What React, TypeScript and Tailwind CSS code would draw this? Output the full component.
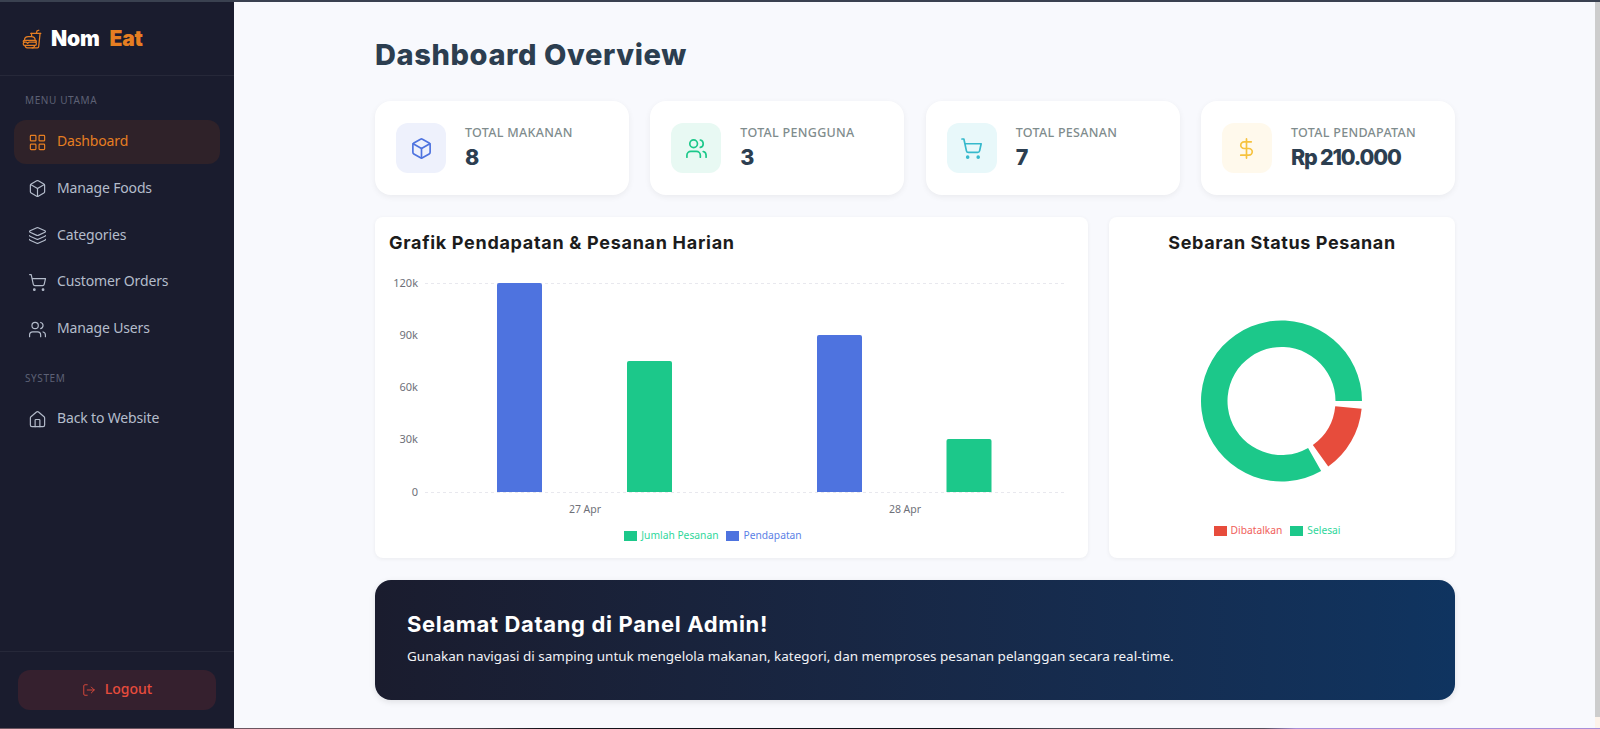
import React from "react";
import { Box, DollarSign, Home, Layers, LayoutGrid, LogOut, ShoppingCart, Users } from "lucide-react";
import { IoFastFoodOutline } from "react-icons/io5";

const bodyFont = "font-['Noto_Sans',sans-serif]";
const headFont = "font-['Inter',sans-serif]";

const menu = [
  { label: "Dashboard", icon: LayoutGrid, active: true },
  { label: "Manage Foods", icon: Box },
  { label: "Categories", icon: Layers },
  { label: "Customer Orders", icon: ShoppingCart },
  { label: "Manage Users", icon: Users },
];

const stats = [
  { label: "TOTAL MAKANAN", value: "8", icon: Box, box: "bg-[#eef1fc]", color: "text-[#4e73df]" },
  { label: "TOTAL PENGGUNA", value: "3", icon: Users, box: "bg-[#e8f9f3]", color: "text-[#1cc88a]" },
  { label: "TOTAL PESANAN", value: "7", icon: ShoppingCart, box: "bg-[#e8f8fa]", color: "text-[#36b9cc]" },
  { label: "TOTAL PENDAPATAN", value: "Rp 210.000", icon: DollarSign, box: "bg-[#fff9ec]", color: "text-[#f6c23e]" },
];

const ticks = [
  { label: "120k", y: 10 },
  { label: "90k", y: 62 },
  { label: "60k", y: 114 },
  { label: "30k", y: 166 },
  { label: "0", y: 219 },
];

const bars = [
  { x: 108, y: 10, h: 209, fill: "#4e73df" },
  { x: 238, y: 88, h: 131, fill: "#1cc88a" },
  { x: 428, y: 62, h: 157, fill: "#4e73df" },
  { x: 557.5, y: 166, h: 53, fill: "#1cc88a" },
];

// donut slice between two angles, clockwise from east
function slice(cx: number, cy: number, r0: number, r1: number, a0: number, a1: number) {
  const p = (r: number, a: number) => {
    const t = (a * Math.PI) / 180;
    return `${(cx + r * Math.cos(t)).toFixed(2)} ${(cy + r * Math.sin(t)).toFixed(2)}`;
  };
  const large = a1 - a0 > 180 ? 1 : 0;
  return `M${p(r1, a0)}A${r1} ${r1} 0 ${large} 1 ${p(r1, a1)}L${p(r0, a1)}A${r0} ${r0} 0 ${large} 0 ${p(r0, a0)}Z`;
}

function NavItem({ label, icon: Icon, active }: { label: string; icon: React.ElementType; active?: boolean }) {
  return (
    <a className={`flex items-center gap-[10px] h-[44px] rounded-xl px-[14px] text-[14px] tracking-[-0.15px] ${active ? "bg-[#2f2229] text-[#e67e22]" : "text-[#b4bccb]"}`}>
      <Icon size={19} strokeWidth={1.5} />
      <span className="pb-[3px]">{label}</span>
    </a>
  );
}

function StatCard({ label, value, icon: Icon, box, color }: (typeof stats)[number]) {
  return (
    <div className="flex items-center gap-[19px] h-[94px] rounded-2xl bg-white pl-[21px] pr-4 shadow-[0_2px_6px_rgba(0,0,0,0.06)]">
      <div className={`flex items-center justify-center w-[50px] h-[50px] rounded-xl ${box} ${color}`}>
        <Icon size={23} strokeWidth={1.75} />
      </div>
      <div>
        <p className="text-[12.5px] font-medium leading-[18px] tracking-[0.3px] text-[#7f8c8d]">{label}</p>
        <p className={`${headFont} text-[21.5px] font-extrabold leading-[30px] tracking-[-1.2px] text-[#2c3e50]`}>{value}</p>
      </div>
    </div>
  );
}

export default function App() {
  return (
    <div className={`${bodyFont} flex flex-col h-[729px] overflow-hidden bg-[#f8f9fd]`}>
      <div className="h-[2px] shrink-0 bg-[#3a4150]" />
      <div className="flex flex-1 min-h-0">
        <aside className="flex flex-col w-[234px] shrink-0 bg-[#1a1c2e]">
          <div className="flex items-center gap-[9px] h-[74px] border-b border-[#262839] px-[22px]">
            <IoFastFoodOutline size={20} className="text-[#e67e22]" />
            <span className={`${headFont} text-[21px] font-black tracking-[-0.2px] text-white`}>
              Nom <span className="ml-[6px] text-[#e67e22]">Eat</span>
            </span>
          </div>
          <nav className="flex flex-col flex-1 px-[14px]">
            <p className="mb-[12px] mt-[17px] px-[11px] text-[10px] tracking-[0.6px] text-[#5d6175]">MENU UTAMA</p>
            <div className="flex flex-col gap-[2.8px]">
              {menu.map((item) => (
                <NavItem key={item.label} {...item} />
              ))}
            </div>
            <p className="mb-[11px] mt-[20px] px-[11px] text-[10px] tracking-[0.6px] text-[#5d6175]">SYSTEM</p>
            <NavItem label="Back to Website" icon={Home} />
          </nav>
          <div className="border-t border-[#262839] px-[18px] pb-[18px] pt-[18px]">
            <button className="flex items-center justify-center gap-[9px] w-full h-[40px] rounded-xl bg-[#35202e] text-[14px] font-medium text-[#e74c3c]">
              <LogOut size={14} strokeWidth={1.5} />
              <span className="pb-[3px]">Logout</span>
            </button>
          </div>
        </aside>

        <main className="flex-1 min-w-0 pl-[1px]">
          <div className="mx-auto max-w-[1080px] pt-[33px]">
            <h1 className={`${headFont} text-[29px] font-extrabold leading-[40px] tracking-[0.6px] text-[#2c3e50]`}>Dashboard Overview</h1>
            <div className="mt-[26px] grid grid-cols-4 gap-[21.33px]">
              {stats.map((s) => (
                <StatCard key={s.label} {...s} />
              ))}
            </div>

            <div className="mt-[22px] flex gap-[21px]">
              <section className="w-[713px] h-[341px] rounded-lg bg-white px-[14px] pt-[14px] shadow-[0_1px_4px_rgba(0,0,0,0.06)]">
                <h2 className={`${headFont} text-[18px] font-bold leading-[24px] tracking-[0.7px] text-[#1c1c1c]`}>Grafik Pendapatan &amp; Pesanan Harian</h2>
                <svg width="690" height="264" className="mt-[18px] block" fontFamily="Noto Sans, sans-serif" fontSize="11">
                  {ticks.map((t) => (
                    <g key={t.label}>
                      <line x1="36" x2="676" y1={t.y + 0.5} y2={t.y + 0.5} stroke={t.y === 10 || t.y === 219 ? "#e8e8ee" : "none"} strokeDasharray="3 3" />
                      <text x="29" y={t.y + 4} textAnchor="end" fill="#6e7079">{t.label}</text>
                    </g>
                  ))}
                  {bars.map((b) => (
                    <path key={b.x} d={`M${b.x} ${b.y + b.h}V${b.y + 2}q0 -2 2 -2H${b.x + 43}q2 0 2 2V${b.y + b.h}Z`} fill={b.fill} />
                  ))}
                  <text x="196" y="240" textAnchor="middle" fill="#6e7079" fontSize="10.5">27 Apr</text>
                  <text x="516" y="240" textAnchor="middle" fill="#6e7079" fontSize="10.5">28 Apr</text>
                </svg>
                <div className="flex justify-center gap-2 -mt-[9px] pr-[37px] text-[10.25px]">
                  <span className="flex items-center gap-1 text-[#2fd79b]"><i className="w-[13px] h-[10px] bg-[#1cc88a]" />Jumlah Pesanan</span>
                  <span className="flex items-center gap-1 text-[#5b7fe6]"><i className="w-[13px] h-[10px] bg-[#4e73df]" />Pendapatan</span>
                </div>
              </section>

              <section className="flex-1 h-[341px] rounded-lg bg-white pt-[14px] shadow-[0_1px_4px_rgba(0,0,0,0.06)]">
                <h2 className={`${headFont} text-center text-[18px] font-bold leading-[24px] tracking-[0.6px] text-[#1c1c1c]`}>Sebaran Status Pesanan</h2>
                <svg width="346" height="170" className="mt-[61px] block">
                  <path d={slice(172.5, 85, 54, 80.5, 60.5, 360)} fill="#1cc88a" />
                  <path d={slice(172.5, 85, 54, 80.5, 5.5, 54.5)} fill="#e74c3c" />
                </svg>
                <div className="flex justify-center gap-2 mt-[37px] pr-[10px] text-[10.25px]">
                  <span className="flex items-center gap-1 text-[#f0605a]"><i className="w-[13px] h-[10px] bg-[#e74c3c]" />Dibatalkan</span>
                  <span className="flex items-center gap-1 text-[#2fd79b]"><i className="w-[13px] h-[10px] bg-[#1cc88a]" />Selesai</span>
                </div>
              </section>
            </div>

            <div className="mt-[22px] h-[120px] rounded-2xl bg-gradient-to-r from-[#1a1c2e] to-[#0f3460] px-8 pt-[29px] shadow-[0_2px_6px_rgba(0,0,0,0.1)]">
              <h3 className={`${headFont} text-[22px] font-bold leading-[30px] tracking-[0.65px] text-white`}>Selamat Datang di Panel Admin!</h3>
              <p className="mt-[7px] text-[13.48px] leading-[20px] text-[#f1f2f6]">
                Gunakan navigasi di samping untuk mengelola makanan, kategori, dan memproses pesanan pelanggan secara real-time.
              </p>
            </div>
          </div>
        </main>

        {/* scrollbar */}
        <div className="flex flex-col w-[5px] shrink-0">
          <div className="flex-1 bg-[#cdcdcd]" />
          <div className="h-[11px] bg-[#fdf3ea]" />
        </div>
      </div>
      <div className="h-[1px] shrink-0 bg-[linear-gradient(90deg,#6b5560_0%,#6b5560_24%,#4a3f48_30%,#14121a_34%,#14121a_60%,#4a4652_66%,#55505e_79%,#a98fd8_81%,#a98fd8_100%)]" />
    </div>
  );
}
